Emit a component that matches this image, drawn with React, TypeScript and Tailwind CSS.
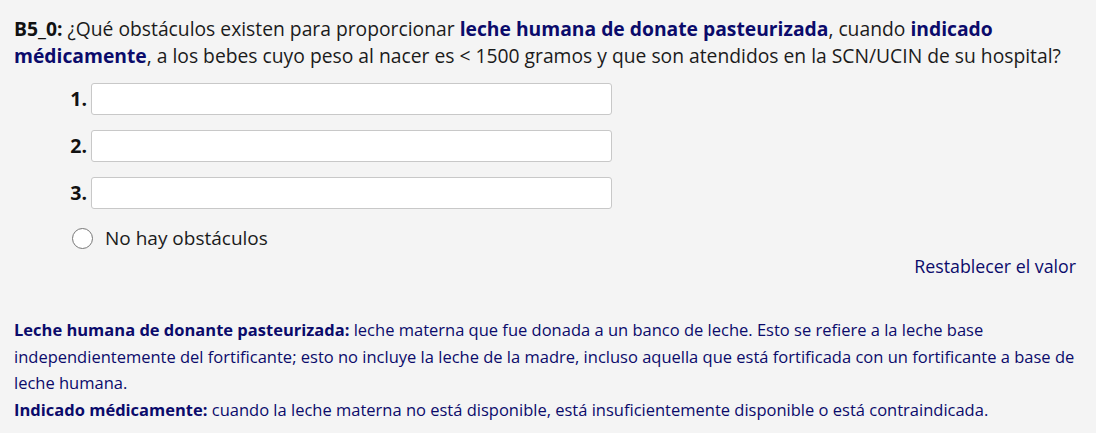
import React from "react";

const navy = "text-[#0b0b6b]";

function AnswerRow({ n }: { n: number }) {
  return (
    <div className="flex items-center gap-[4px]">
      <span className="w-[22px] text-right text-[19.5px] font-bold text-[#111]">{n}.</span>
      <input
        type="text"
        className="h-[32px] w-[521px] rounded-[3px] border border-[#c8c8c8] bg-white px-2 outline-none"
      />
    </div>
  );
}

export default function App() {
  return (
    <div
      className="min-h-[433px] w-full bg-[#f4f4f4] pl-[14px] pr-[8px] pt-[15px]"
      style={{ fontFamily: '"Open Sans", "Liberation Sans", sans-serif' }}
    >
      {/* Question */}
      <p className="pr-[12px] text-[19.3px] leading-[27px] text-[#1b1b1b]">
        <span className="font-bold text-[#111]">B5_0:</span> ¿Qué obstáculos existen para proporcionar{" "}
        <span className={`font-bold ${navy}`}>leche humana de donate pasteurizada</span>, cuando{" "}
        <span className={`font-bold ${navy}`}>indicado médicamente</span>, a los bebes cuyo peso al nacer es &lt; 1500
        gramos y que son atendidos en la SCN/UCIN de su hospital?
      </p>

      {/* Answers */}
      <div className="mt-[14px] flex flex-col gap-[15px] pl-[51px]">
        <AnswerRow n={1} />
        <AnswerRow n={2} />
        <AnswerRow n={3} />
      </div>

      <label className="mt-[15px] flex items-center gap-[12px] pl-[58px]">
        <span className="h-[21px] w-[21px] rounded-full border-[1.5px] border-[#777] bg-white" />
        <span className="text-[19px] text-[#1b1b1b]">No hay obstáculos</span>
      </label>

      <div className="flex justify-end pr-[12px]">
        <button className={`text-[17.8px] ${navy}`}>Restablecer el valor</button>
      </div>

      {/* Definitions */}
      <div className={`mt-[38px] pr-[12px] text-[16.5px] leading-[26.5px] ${navy}`}>
        <p>
          <span className="font-bold">Leche humana de donante pasteurizada:</span> leche materna que fue donada a un banco
          de leche. Esto se refiere a la leche base independientemente del fortificante; esto no incluye la leche de la
          madre, incluso aquella que está fortificada con un fortificante a base de leche humana.
        </p>
        <p>
          <span className="font-bold">Indicado médicamente:</span> cuando la leche materna no está disponible, está
          insuficientemente disponible o está contraindicada.
        </p>
      </div>
    </div>
  );
}
